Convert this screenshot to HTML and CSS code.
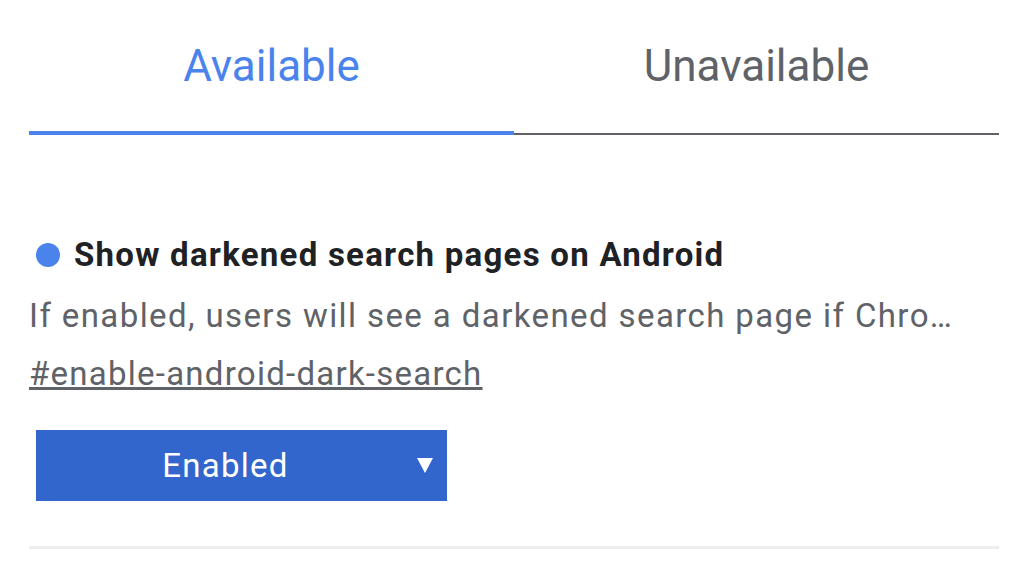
FILE: index.html
```html
<!DOCTYPE html>
<html>
<head>
<meta charset="utf-8">
<link rel="stylesheet" href="styles.css">
</head>
<body>
<div class="page">
  <div class="tabs">
    <div class="tab active">Available</div>
    <div class="tab">Unavailable</div>
  </div>
  <div class="flag">
    <div class="flag-title"><span class="dot"></span><span>Show darkened search pages on Android</span></div>
    <div class="flag-desc">If enabled, users will see a darkened search page if Chrome's dark mode is enabled.</div>
    <div class="flag-link"><a href="#">#enable-android-dark-search</a></div>
    <div class="select"><span class="select-text">Enabled</span><svg class="arrow" width="16" height="15" viewBox="0 0 16 15"><polygon points="0,0 16,0 8,15" fill="#fff"/></svg></div>
  </div>
  <div class="divider"></div>
</div>
</body>
</html>
```
FILE: styles.css
```css
html, body { margin: 0; padding: 0; background: #fff; }
body { font-family: Roboto, "Noto Sans", sans-serif; }
.page { padding: 0 29px; width: 970px; }
.tabs { display: flex; padding-top: 38px; }
.tab {
  flex: 1;
  text-align: center;
  font-size: 44px;
  line-height: 56px;
  color: #5f6368;
  padding-bottom: 39px;
  border-bottom: 2px solid #5f6368;
}
.tab.active {
  color: #4a83ec;
  border-bottom: 4px solid #4a83ec;
  padding-bottom: 37px;
}
.flag { padding-top: 98px; }
.flag-title {
  display: flex;
  align-items: center;
  gap: 14px;
  font-size: 33px;
  font-weight: 700;
  letter-spacing: 1.25px;
  color: #202124;
  line-height: 44px;
  padding-left: 7px;
}
.dot { width: 24px; height: 24px; border-radius: 50%; background: #4a83ec; flex: none; }
.flag-desc {
  margin-top: 10px;
  font-size: 33px;
  letter-spacing: 1.4px;
  color: #5f6368;
  line-height: 58px;
  white-space: nowrap;
  overflow: hidden;
  text-overflow: ellipsis;
  width: 928px;
}
.flag-link { font-size: 33px; letter-spacing: 1.25px; line-height: 57px; }
.flag-link a { color: #5f6368; text-decoration: underline; }
.select {
  margin-top: 28px;
  margin-left: 7px;
  width: 411px;
  height: 71px;
  background: #3366cc;
  color: #fff;
  display: flex;
  align-items: center;
  justify-content: center;
  position: relative;
  font-size: 33px;
  letter-spacing: 1.25px;
}
.select-text { margin-left: -32px; }
.arrow { position: absolute; right: 14px; top: 28px; }
.divider { margin-top: 45px; height: 3px; background: #eeeeee; }
```
